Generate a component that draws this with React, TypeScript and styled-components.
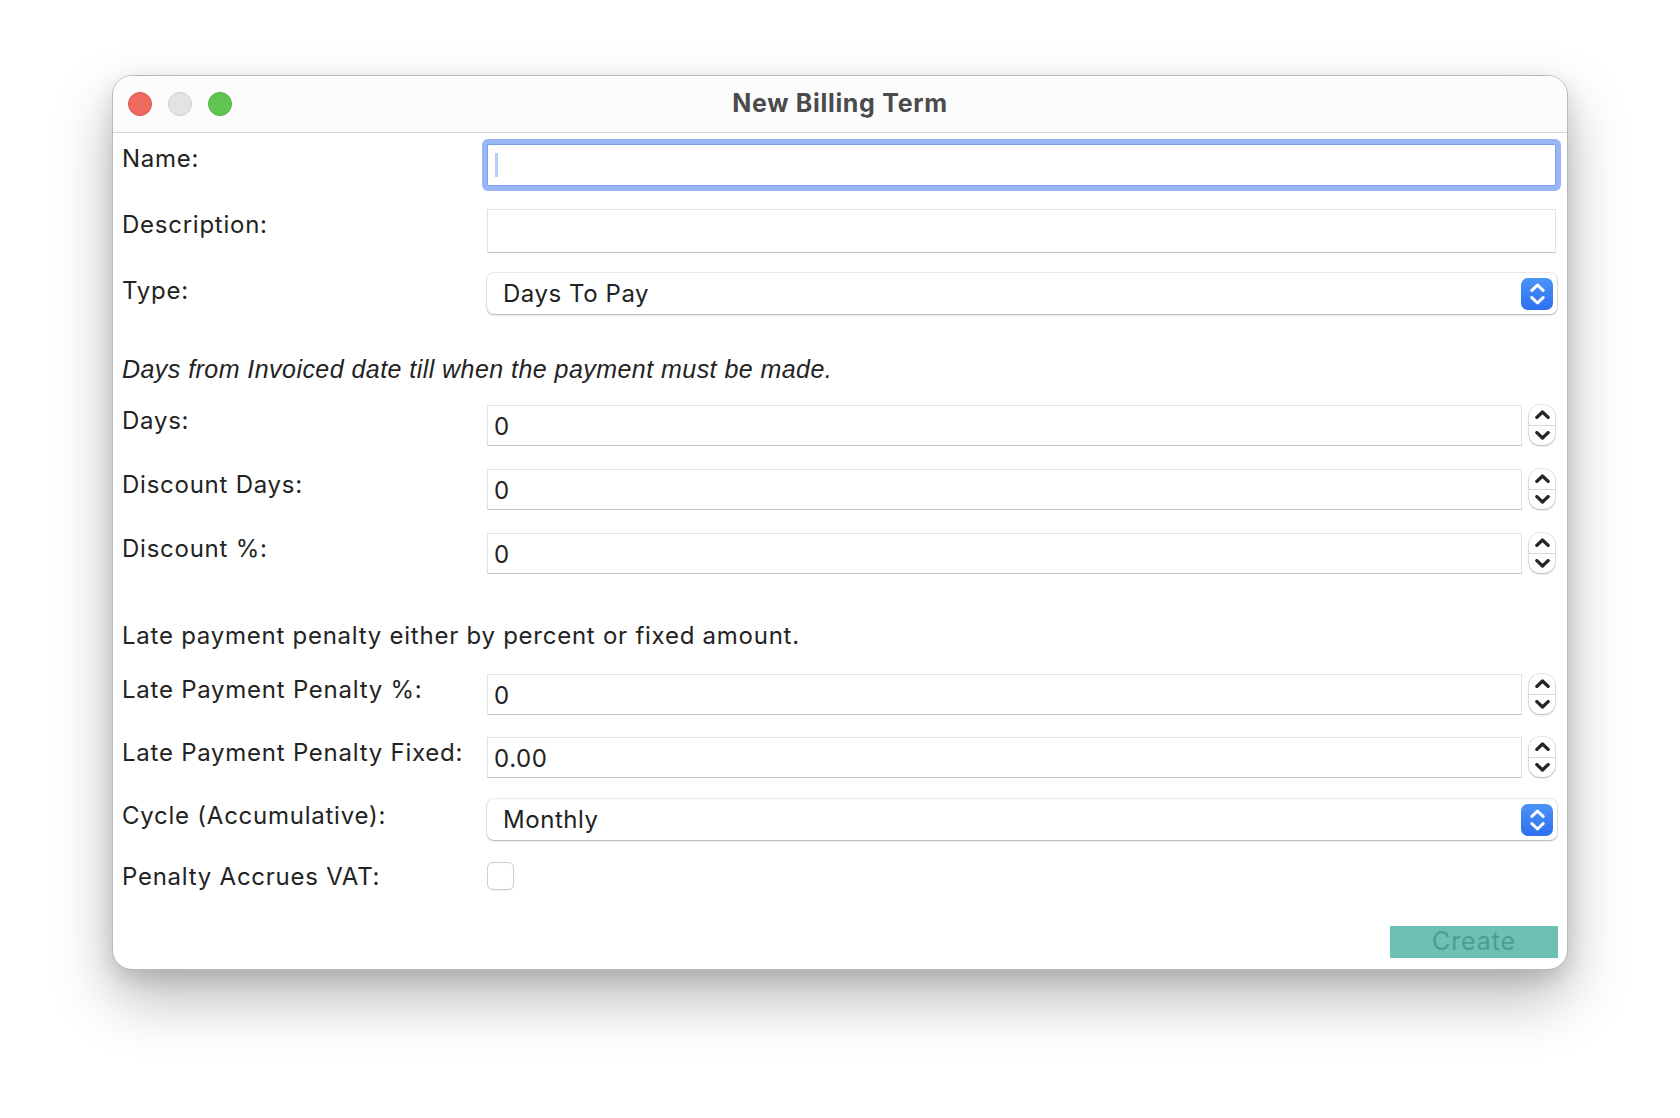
import React from "react";
import styled, { createGlobalStyle } from "styled-components";

const GlobalStyle = createGlobalStyle`
  html, body {
    margin: 0;
    padding: 0;
    background: #ffffff;
  }
  body {
    font-family: Inter, "Noto Sans", sans-serif;
    color: #222222;
  }
`;

const Page = styled.div`
  padding: 75px 0 0 112px;
  height: 1118px;
  box-sizing: border-box;
`;

const Window = styled.div`
  width: 1456px;
  height: 895px;
  box-sizing: border-box;
  background: #ffffff;
  border: 1px solid #b9b9b9;
  border-radius: 20px;
  box-shadow: 0 28px 60px rgba(0, 0, 0, 0.28), 0 8px 20px rgba(0, 0, 0, 0.12);
  display: flex;
  flex-direction: column;
  overflow: hidden;
`;

const TitleBar = styled.div`
  height: 56px;
  flex: none;
  display: flex;
  align-items: center;
  position: relative;
  background: #fcfcfc;
  border-bottom: 1px solid #d6d6d6;
`;

const Lights = styled.div`
  display: flex;
  gap: 16px;
  padding-left: 15px;
`;

const Light = styled.span<{ $fill: string; $edge: string }>`
  width: 24px;
  height: 24px;
  border-radius: 50%;
  box-sizing: border-box;
  background: ${(p) => p.$fill};
  border: 1px solid ${(p) => p.$edge};
`;

const Title = styled.div`
  position: absolute;
  left: 0;
  right: 0;
  top: 0;
  bottom: 2px;
  display: flex;
  align-items: center;
  justify-content: center;
  font-family: Inter, "Noto Sans", sans-serif;
  font-weight: 700;
  font-size: 25px;
  letter-spacing: 0.7px;
  color: #4b4b4b;
  pointer-events: none;
`;

const Form = styled.div`
  display: flex;
  flex-direction: column;
  padding: 11px 10px 0 9px;
`;

const Row = styled.div<{ $gap: number }>`
  display: grid;
  grid-template-columns: 365px 1fr;
  margin-top: ${(p) => p.$gap}px;
`;

const Label = styled.div<{ $pt?: number }>`
  font-size: 24px;
  letter-spacing: 0.75px;
  line-height: 30px;
  padding-top: ${(p) => p.$pt ?? 1}px;
  color: #232323;
  white-space: nowrap;
`;

const Note = styled.div<{ $gap: number; $italic?: boolean }>`
  margin-top: ${(p) => p.$gap}px;
  font-size: ${(p) => (p.$italic ? "25px" : "24px")};
  letter-spacing: ${(p) => (p.$italic ? "0.45px" : "0.75px")};
  line-height: 30px;
  font-family: ${(p) =>
    p.$italic ? '"Liberation Sans", Arial, sans-serif' : 'Inter, "Noto Sans", sans-serif'};
  font-style: ${(p) => (p.$italic ? "italic" : "normal")};
  color: #232323;
`;

const TextBox = styled.div<{ $h: number; $focus?: boolean }>`
  height: ${(p) => p.$h}px;
  box-sizing: border-box;
  margin-right: 1px;
  background: #ffffff;
  display: flex;
  align-items: center;
  padding-left: 7px;
  font-size: 24px;
  color: #222;
  border: 1px solid ${(p) => (p.$focus ? "#7e9ff0" : "#e2e2e2")};
  border-bottom-color: ${(p) => (p.$focus ? "#7e9ff0" : "#c4c4c4")};
  box-shadow: ${(p) => (p.$focus ? "0 0 0 5px #9ab5f6" : "none")};
  border-radius: ${(p) => (p.$focus ? "2px" : "0")};
`;

const Caret = styled.span`
  width: 3px;
  height: 24px;
  background: #b9cdf8;
`;

const NumberWrap = styled.div`
  display: flex;
  align-items: stretch;
  gap: 7px;
  margin-right: 2px;
`;

const NumberBox = styled.div`
  flex: 1;
  height: 41px;
  box-sizing: border-box;
  border: 1px solid #e2e2e2;
  border-bottom-color: #c4c4c4;
  display: flex;
  align-items: center;
  padding-left: 6px;
  padding-top: 2px;
  font-size: 24px;
  letter-spacing: 0.6px;
  color: #222;
`;

const Stepper = styled.div`
  width: 26px;
  height: 40px;
  box-sizing: border-box;
  border-radius: 11px;
  background: #ffffff;
  box-shadow: 0 0 0 1px rgba(0, 0, 0, 0.09), 0 1px 2px rgba(0, 0, 0, 0.22);
  display: flex;
  flex-direction: column;
`;

const StepHalf = styled.div<{ $top?: boolean }>`
  flex: 1;
  display: flex;
  align-items: center;
  justify-content: center;
  border-bottom: ${(p) => (p.$top ? "1px solid #dadada" : "none")};
`;

const Select = styled.div`
  height: 41px;
  box-sizing: border-box;
  border-radius: 7px;
  background: #ffffff;
  box-shadow: 0 0 0 1px rgba(0, 0, 0, 0.07), 0 1px 2px rgba(0, 0, 0, 0.25);
  display: flex;
  align-items: center;
  justify-content: space-between;
  padding: 0 4px 0 16px;
  font-size: 24px;
  letter-spacing: 0.55px;
  color: #222;
`;

const SelectArrows = styled.div`
  width: 32px;
  height: 32px;
  border-radius: 7px;
  background: linear-gradient(#4b94f8, #2d6ff0);
  display: flex;
  flex-direction: column;
  align-items: center;
  justify-content: center;
  gap: 4px;
`;

const Check = styled.div`
  width: 27px;
  height: 28px;
  box-sizing: border-box;
  border-radius: 6px;
  background: #ffffff;
  border: 1px solid #cdcdcd;
  box-shadow: 0 1px 1px rgba(0, 0, 0, 0.06);
`;

const Footer = styled.div`
  display: flex;
  justify-content: flex-end;
  margin-top: 34px;
`;

const CreateButton = styled.button`
  width: 168px;
  height: 32px;
  margin-right: -1px;
  border: none;
  background: #6dc0b3;
  color: #4f9c90;
  font-family: Inter, "Noto Sans", sans-serif;
  font-size: 25px;
  letter-spacing: 0.9px;
  padding: 0 0 2px;
  line-height: 30px;
`;

const Chevron = ({ up, color, w, sw }: { up?: boolean; color: string; w: number; sw: number }) => (
  <svg width={w} height={w * 0.6} viewBox="0 0 12 7" fill="none">
    <path
      d={up ? "M1.5 5.8 L6 1.5 L10.5 5.8" : "M1.5 1.2 L6 5.5 L10.5 1.2"}
      stroke={color}
      strokeWidth={sw}
      strokeLinecap="round"
      strokeLinejoin="round"
    />
  </svg>
);

const NumberField = ({ value }: { value: string }) => (
  <NumberWrap>
    <NumberBox>{value}</NumberBox>
    <Stepper>
      <StepHalf $top>
        <Chevron up color="#262626" w={15} sw={2.7} />
      </StepHalf>
      <StepHalf>
        <Chevron color="#262626" w={15} sw={2.7} />
      </StepHalf>
    </Stepper>
  </NumberWrap>
);

const PopUp = ({ value }: { value: string }) => (
  <Select>
    <span>{value}</span>
    <SelectArrows>
      <Chevron up color="#ffffff" w={15} sw={2.4} />
      <Chevron color="#ffffff" w={15} sw={2.4} />
    </SelectArrows>
  </Select>
);

export default function App() {
  return (
    <>
      <GlobalStyle />
      <Page>
        <Window>
          <TitleBar>
            <Lights>
              <Light $fill="#ee6a5e" $edge="#d65446" />
              <Light $fill="#e3e3e3" $edge="#cfcfcf" />
              <Light $fill="#61c554" $edge="#4ead43" />
            </Lights>
            <Title>New Billing Term</Title>
          </TitleBar>
          <Form>
            <Row $gap={0}>
              <Label $pt={0}>Name:</Label>
              <TextBox $h={42} $focus>
                <Caret />
              </TextBox>
            </Row>
            <Row $gap={23}>
              <Label $pt={1}>Description:</Label>
              <TextBox $h={44} />
            </Row>
            <Row $gap={20}>
              <Label $pt={3}>Type:</Label>
              <PopUp value="Days To Pay" />
            </Row>
            <Note $gap={40} $italic>
              Days from Invoiced date till when the payment must be made.
            </Note>
            <Row $gap={21}>
              <Label>Days:</Label>
              <NumberField value="0" />
            </Row>
            <Row $gap={23}>
              <Label>Discount Days:</Label>
              <NumberField value="0" />
            </Row>
            <Row $gap={23}>
              <Label>Discount %:</Label>
              <NumberField value="0" />
            </Row>
            <Note $gap={47}>Late payment penalty either by percent or fixed amount.</Note>
            <Row $gap={23}>
              <Label>Late Payment Penalty %:</Label>
              <NumberField value="0" />
            </Row>
            <Row $gap={22}>
              <Label>Late Payment Penalty Fixed:</Label>
              <NumberField value="0.00" />
            </Row>
            <Row $gap={21}>
              <Label $pt={2}>Cycle (Accumulative):</Label>
              <PopUp value="Monthly" />
            </Row>
            <Row $gap={22}>
              <Label $pt={0}>Penalty Accrues VAT:</Label>
              <Check />
            </Row>
            <Footer>
              <CreateButton>Create</CreateButton>
            </Footer>
          </Form>
        </Window>
      </Page>
    </>
  );
}
